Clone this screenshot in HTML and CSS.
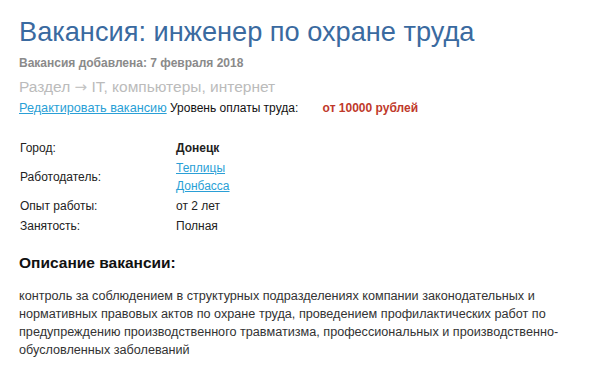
FILE: index.html
```html
<!DOCTYPE html>
<html lang="ru">
<head>
<meta charset="UTF-8" />
<title>Вакансия: инженер по охране труда</title>
<link rel="stylesheet" href="styles.css">
</head>
<body>

<div class="vacancy">
  <h1 class="vacancy-title">Вакансия: инженер по охране труда</h1>
  <div class="vacancy-date">Вакансия добавлена: 7 февраля 2018</div>
  <div class="vacancy-section">Раздел <span class="arrow">&rarr;</span> IT, компьютеры, интернет</div>
  <div class="vacancy-salary">
    <a href="#" class="link edit-link">Редактировать вакансию</a> Уровень оплаты труда:
    <span class="salary-value">от 10000 рублей</span>
  </div>

  <table class="vacancy-info">
    <tr>
      <td class="info-label">Город:</td>
      <td class="info-value"><b>Донецк</b></td>
    </tr>
    <tr>
      <td class="info-label">Работодатель:</td>
      <td class="info-value"><a href="#" class="link">Теплицы Донбасса</a></td>
    </tr>
    <tr>
      <td class="info-label">Опыт работы:</td>
      <td class="info-value">от 2 лет</td>
    </tr>
    <tr>
      <td class="info-label">Занятость:</td>
      <td class="info-value">Полная</td>
    </tr>
  </table>

  <h2 class="vacancy-subtitle">Описание вакансии:</h2>
  <p class="vacancy-text">контроль за соблюдением в структурных подразделениях компании законодательных и нормативных правовых актов по охране труда, проведением профилактических работ по предупреждению производственного травматизма, профессиональных и производственно-обусловленных заболеваний</p>
</div>

</body>
</html>
```

FILE: styles.css
```css
body {
  margin: 0;
  font-family: 'Liberation Sans', Arial, sans-serif;
  font-size: 12px;
  color: #222;
  background: #fff;
}
.vacancy {
  padding: 14px 19px 0;
  width: 545px;
}
.vacancy-title {
  margin: 0;
  font-size: 27.2px;
  font-weight: normal;
  line-height: 36px;
  color: #3a6aa0;
}
.vacancy-date {
  margin-top: 5px;
  font-weight: bold;
  color: #8a8a8a;
  line-height: 16px;
}
.vacancy-section {
  margin-top: 6px;
  font-size: 15.5px;
  line-height: 20px;
  color: #bbb;
}
.arrow {
  font-family: 'DejaVu Sans', sans-serif;
  font-size: 15px;
  color: #c4c4c4;
}
.vacancy-salary {
  margin-top: 3px;
  line-height: 16px;
  color: #111;
}
.link {
  color: #2a9fd6;
}
.edit-link {
  font-size: 12.7px;
}
.salary-value {
  margin-left: 21px;
  font-weight: bold;
  color: #c0392b;
}
.vacancy-info {
  margin-top: 22px;
  border-collapse: collapse;
}
.vacancy-info td {
  padding: 1px 0;
  line-height: 18px;
  vertical-align: middle;
  color: #222;
}
.info-label {
  width: 156px;
  padding-left: 1px !important;
}
.info-value {
  width: 70px;
}
.vacancy-subtitle {
  margin: 17px 0 0;
  font-size: 15.5px;
  line-height: 20px;
  color: #111;
}
.vacancy-text {
  margin: 14px 0 0;
  font-size: 12.65px;
  line-height: 18px;
  color: #333;
}
```
